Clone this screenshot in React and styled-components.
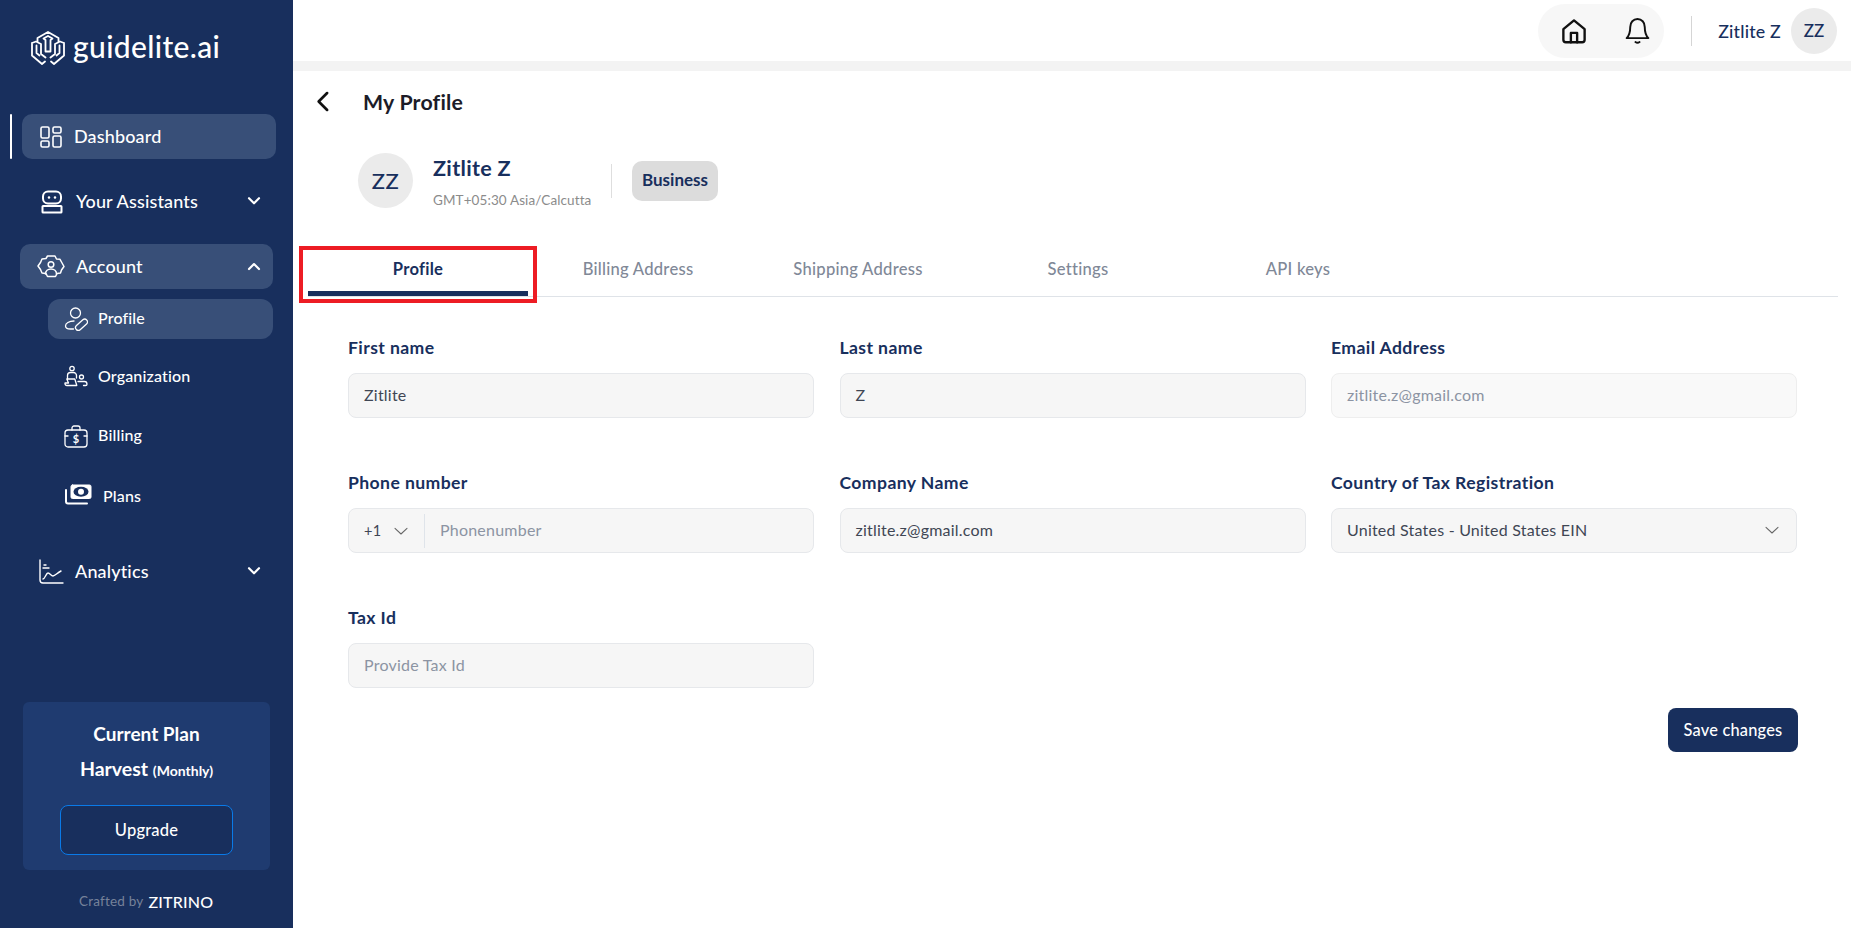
import React from "react";
import styled, { createGlobalStyle } from "styled-components";

const Global = createGlobalStyle`
  html, body { margin: 0; padding: 0; height: 100%; background: #fff; overflow: hidden; }
  body { font-family: Lato, "Noto Sans", sans-serif; color: #182f5d; }
  * { box-sizing: border-box; }
`;

const Shell = styled.div`display: flex; width: 1851px; height: 928px; overflow: hidden;`;
const Sidebar = styled.aside`
  width: 293px; flex: none; height: 928px; background: #182f5d; color: #fff;
  display: flex; flex-direction: column; padding-top: 28px;
`;
const Brand = styled.div`
  display: flex; align-items: center; gap: 8px; padding-left: 31px; height: 40px;
  font-size: 30px; font-weight: 500; letter-spacing: 0.35px;
  span { margin-top: -4px; }
`;
const Nav = styled.nav`display: flex; flex-direction: column; margin-top: 46px;`;
const TopRow = styled.div`
  position: relative; display: flex; align-items: center; height: 45px;
  margin-top: ${p => p.$mt || 0}px;
  margin-left: ${p => p.$ml || 20}px; width: ${p => p.$w || 253}px;
  padding-left: ${p => p.$pl || 20}px; padding-right: 9px; border-radius: 10px;
  background: ${p => p.$active ? "#384f78" : "transparent"};
  font-size: 18px; font-weight: 500; letter-spacing: 0.15px;
`;
const RowText = styled.span`margin-top: ${p => p.$sub ? -3 : -2}px;`;
const ActiveBar = styled.span`
  position: absolute; left: -12px; top: 0; bottom: 0; width: 2px; background: #fff; border-radius: 1px;
`;
const TopIcon = styled.span`display: flex; width: ${p => p.$w || 34}px; flex: none;`;
const Caret = styled.span`margin-left: auto; display: flex;`;
const SubRow = styled.div`
  display: flex; align-items: center; height: 40px; margin-left: 48px; width: 225px;
  margin-top: ${p => p.$mt}px; padding-left: 16px; border-radius: 12px;
  background: ${p => p.$active ? "#384f78" : "transparent"};
  font-size: 16px; font-weight: 500; letter-spacing: 0.15px;
`;
const SubIcon = styled.span`display: flex; width: ${p => p.$w || 34}px; flex: none;`;
const PlanCard = styled.div`
  margin: auto 0 0 23px; width: 247px; height: 168px; border-radius: 6px; background: #1f3b70;
  display: flex; flex-direction: column; align-items: center; padding-top: 20px;
`;
const PlanTitle = styled.div`font-size: 19px; font-weight: 700; line-height: 24px;`;
const PlanName = styled.div`
  font-size: 19.5px; font-weight: 700; line-height: 24px; margin-top: 11px;
  small { font-size: 14px; }
`;
const Upgrade = styled.button`
  margin-top: 22px; width: 173px; height: 50px; background: #182f5d; color: #fff;
  border: 1px solid #0a7ae8; border-radius: 8px; font: 500 16.5px Lato, sans-serif; letter-spacing: .2px;
`;
const Crafted = styled.div`
  height: 58px; padding: 4px 0 0 79px; display: flex; align-items: center; gap: 5px;
  font-size: 13.5px; color: #76829a; letter-spacing: .2px;
  b { font-size: 16px; font-weight: 500; color: #fff; letter-spacing: .2px; }
`;

const Main = styled.main`flex: 1; min-width: 0; display: flex; flex-direction: column;`;
const Header = styled.header`
  height: 61px; flex: none; display: flex; align-items: center; justify-content: flex-end; padding-right: 14px;
`;
const IconPill = styled.div`
  width: 126px; height: 54px; border-radius: 27px; background: #f7f7f7;
  display: flex; align-items: center; justify-content: space-between; padding: 0 12px 0 21px;
`;
const HeaderDivider = styled.span`width: 1px; height: 30px; background: #d5d5d5; margin: 0 26px 0 27px;`;
const HeaderName = styled.span`font-size: 17.8px; font-weight: 500; letter-spacing: .2px; color: #182f5d; margin-right: 10px;`;
const HeaderAvatar = styled.div`
  width: 46px; height: 46px; border-radius: 50%; background: #ebebeb; font-size: 17px; font-weight: 500;
  display: flex; align-items: center; justify-content: center;
`;
const Strip = styled.div`height: 10px; background: #f3f3f3; flex: none;`;
const Content = styled.div`flex: 1; padding: 0 13px 0 15px; position: relative;`;
const TitleRow = styled.div`display: flex; align-items: center; height: 62px; padding-left: 1px; margin-top: -1px;`;
const Title = styled.h1`margin: 2px 0 0 25px; font-size: 21.3px; font-weight: 700; color: #1c1c28; letter-spacing: .2px;`;
const ProfileHead = styled.div`display: flex; align-items: center; margin: 21px 0 0 50px; height: 55px;`;
const Avatar = styled.div`
  width: 55px; height: 55px; border-radius: 50%; background: #ebebeb; font-size: 22px; font-weight: 500;
  display: flex; align-items: center; justify-content: center; letter-spacing: .5px;
`;
const NameCol = styled.div`margin-left: 20px; width: 178px; display: flex; flex-direction: column;`;
const Name = styled.div`font-size: 21.6px; font-weight: 700; line-height: 30px; letter-spacing: .3px;`;
const Tz = styled.div`font-size: 13.5px; color: #8b8b8b; line-height: 18px; margin-top: 8px; letter-spacing: .1px;`;
const VDivider = styled.span`width: 1px; height: 34px; background: #dedede;`;
const Badge = styled.span`
  margin-left: 20px; width: 86px; height: 40px; border-radius: 10px; background: #dcdcdc;
  display: flex; align-items: center; justify-content: center; font-size: 17px; font-weight: 700; padding-bottom: 2px;
`;
const Tabs = styled.div`
  display: flex; margin-top: 38px; height: 51px; border-bottom: 1px solid #dfe3e8;
`;
const Tab = styled.div`
  position: relative; width: 220px; height: 50px; display: flex; align-items: center; justify-content: center;
  padding-bottom: ${p => p.$active ? 0 : 4}px;
  font-size: 16.6px; font-weight: ${p => p.$active ? 700 : 500}; letter-spacing: .25px;
  color: ${p => p.$active ? "#182f5d" : "#808897"};
  ${p => p.$active ? "border-bottom: 5px solid #182f5d;" : ""}
`;
const Callout = styled.span`
  position: absolute; left: -9px; right: -9px; top: 0; bottom: -12px; border: 4px solid #ed1c24;
  pointer-events: none;
`;
const Form = styled.div`
  display: grid; grid-template-columns: repeat(3, 466px); column-gap: 25.5px; row-gap: 53px;
  margin: 39px 0 0 40px;
`;
const Field = styled.div`display: flex; flex-direction: column;`;
const Label = styled.label`font-size: 17.6px; font-weight: 700; line-height: 24px; color: #182f5d; margin-bottom: 13px; letter-spacing: .4px;`;
const Box = styled.div`
  height: 45px; border: 1px solid ${p => p.$disabled ? "#eeeeee" : "#e6e8eb"}; border-radius: 8px;
  background: ${p => p.$disabled ? "#f9f9f9" : "#f6f6f6"}; display: flex; align-items: center; padding: 0 15px 2px;
  font-size: 16px; letter-spacing: .22px; color: ${p => p.$muted ? "#8c94a3" : "#3f4654"};
`;
const Code = styled.span`
  display: flex; align-items: center; gap: 11px; width: 61px; height: 34px; flex: none; margin-top: 2px;
  border-right: 1px solid #dfe4ea; font-size: 14.5px; color: #3f4654;
`;
const PhoneHint = styled.span`margin-left: 15px;`;
const Grow = styled.span`margin-left: auto; display: flex;`;
const Actions = styled.div`display: flex; justify-content: flex-end; width: 1450px; margin: 20px 0 0 40px;`;
const Save = styled.button`
  width: 130px; height: 44px; border: 0; border-radius: 8px; background: #182f5d; color: #fff;
  font: 500 16.4px Lato, sans-serif; letter-spacing: .2px; padding-bottom: 2px;
`;

const I = ({ s = 24, children, w = 1.7, c = "currentColor", vb = 24 }) => (
  <svg width={s} height={s} viewBox={`0 0 ${vb} ${vb}`} fill="none" stroke={c} strokeWidth={w} strokeLinecap="round" strokeLinejoin="round">{children}</svg>
);
const Logo = () => (
  <I s={34} w={1.8} vb={34}>
    <path d="M6.500 10.500V7L17 1l10.500 6v3.500" />
    <path d="M12.500 7.500 17 5l4.500 2.500L19.500 9v11.500h-5V9z" />
    <path d="M1 12l4-1.500 5 2.500v10l4.500 3.500M1 12v12.500L11 33l3-2.500" />
    <path d="M33 12l-4-1.500-5 2.500v10l-4.500 3.500M33 12v12.500L23 33l-3-2.500" />
    <path d="M5.500 14.500v7.500l3 2.500M28.500 14.500v7.500l-3 2.500" />
  </I>
);
const Chevron = ({ up }) => (
  <I s={20} w={2.600}><path d={up ? "M4 14.500 10 8.500l6 6" : "M4 7.500 10 13.500l6-6"} transform="translate(2 0)" /></I>
);
const DashIcon = () => <I s={22} w={1.600} vb={22}><rect x="1" y="1" width="8" height="11" rx="1.500" /><rect x="13" y="1" width="8" height="6" rx="1.500" /><rect x="1" y="15" width="8" height="6" rx="1.500" /><rect x="13" y="10" width="8" height="11" rx="1.500" /></I>;
const BotIcon = () => <I s={24} w={2}><rect x="3" y="1.500" width="18" height="12" rx="5" /><path d="M9 7.500h.01M15 7.500h.01" strokeWidth="2.600" /><rect x="2.500" y="16" width="19" height="6.500" rx=".6" /></I>;
const GearIcon = () => <I s={28} w={1.500} vb={28}><path d="M10.500 3h7.500l1.500 3 3.500.3 1.500 2.700 2.500 4.500-2.500 3.500-1 3-3.500.5-1.500 3H10.500L9 20.500 5 20l-1.500-3.500L1 13l2.500-3.500L5 6l4-.5z" /><circle cx="14" cy="11.500" r="2.800" /><path d="M8.500 21c0-3 2.500-5 5.500-5s5.500 2 5.500 5" /></I>;
const ProfileIcon = () => <I s={24} w={1.300}><circle cx="11.500" cy="6" r="5" /><path d="M10 14c-5 0-8.500 2.500-8.500 5 0 2 2 3 5 3h3" /><rect x="10.500" y="15" width="14" height="5.500" rx="2.700" transform="rotate(-42 17.500 17.750)" /></I>;
const OrgIcon = () => <I s={24} w={1.300}><circle cx="8" cy="3.500" r="2.200" /><path d="M3.500 14v-3.500a3 3 0 0 1 3-3h3a3 3 0 0 1 3 3V13" /><circle cx="17.500" cy="12" r="2" /><path d="M1 18h3.500l-1.700-4h8l2 6.500H3a2 2 0 0 1-2-2.500zM14 16.500h6.500c2 0 2.500 1.500 2.500 2.700 0 1-.5 1.300-1.500 1.300h-2" /></I>;
const BillIcon = () => <I s={24} w={1.300}><path d="M8 6V4a2 2 0 0 1 2-2h4a2 2 0 0 1 2 2v2" /><rect x="1" y="6" width="22" height="17" rx="3" /><path d="M1 12h3M20 12h3" /><text x="12" y="18.500" textAnchor="middle" fontSize="11" fontWeight="700" fill="currentColor" stroke="none" fontFamily="Lato">$</text></I>;
const PlansIcon = () => <I s={28} w={2} vb={28}><rect x="7" y="2" width="20" height="13.500" rx="1.500" fill="#fff" strokeWidth="1" /><ellipse cx="17" cy="8.750" rx="7.500" ry="5" fill="#182f5d" stroke="none" /><circle cx="17" cy="8.750" r="3" fill="#fff" stroke="none" /><path d="M2 7v11.500a2 2 0 0 0 2 2h19" /></I>;
const ChartIcon = () => <I s={26} w={1.400} vb={26}><path d="M2 1v20a3 3 0 0 0 3 3h20" /><path d="M5 20c2 0 3-6 5-6s3 3 5 3 4-3 8-5M6 6h2M5 9h6" /></I>;
const BackIcon = () => <I s={29} w={2.200} c="#111"><path d="M15 5l-7 7 7 7" /></I>;
const Home = () => <I s={30} w={1.900} c="#111"><path d="M3.500 10.500 12 3.500l8.500 7V19a2 2 0 0 1-2 2h-13a2 2 0 0 1-2-2z" /><path d="M9.500 21V13.500h5V21" /></I>;
const Bell = () => <I s={29} w={1.600} c="#111"><path d="M12 2.500c-3.500 0-6 2.700-6 6.500 0 5-1.300 7.500-3 9.300h18c-1.700-1.800-3-4.300-3-9.300 0-3.800-2.500-6.500-6-6.500z" /><path d="M10.300 21.500c1 .8 2.400.8 3.400 0" /></I>;
const Down = () => <I s={18} w={1.400} c="#666"><path d="M4 8.500l8 7.500 8-7.500" /></I>;

export default function App() {
  return (
    <Shell>
      <Global />
      <Sidebar>
        <Brand><Logo /><span>guidelite.ai</span></Brand>
        <Nav>
          <TopRow $active $ml={22} $w={254} $pl={18}><ActiveBar /><TopIcon $w={34}><DashIcon /></TopIcon><RowText>Dashboard</RowText></TopRow>
          <TopRow $mt={20}><TopIcon $w={36}><BotIcon /></TopIcon><RowText>Your Assistants</RowText><Caret><Chevron /></Caret></TopRow>
          <TopRow $mt={20} $active $pl={17}><TopIcon $w={39}><GearIcon /></TopIcon><RowText>Account</RowText><Caret><Chevron up /></Caret></TopRow>
          <SubRow $active $mt={10}><SubIcon><ProfileIcon /></SubIcon><RowText $sub>Profile</RowText></SubRow>
          <SubRow $mt={18}><SubIcon><OrgIcon /></SubIcon><RowText $sub>Organization</RowText></SubRow>
          <SubRow $mt={19}><SubIcon><BillIcon /></SubIcon><RowText $sub>Billing</RowText></SubRow>
          <SubRow $mt={21}><SubIcon $w={39}><PlansIcon /></SubIcon><RowText $sub>Plans</RowText></SubRow>
          <TopRow $mt={32} $pl={18}><TopIcon $w={37}><ChartIcon /></TopIcon><RowText>Analytics</RowText><Caret><Chevron /></Caret></TopRow>
        </Nav>
        <PlanCard>
          <PlanTitle>Current Plan</PlanTitle>
          <PlanName>Harvest <small>(Monthly)</small></PlanName>
          <Upgrade>Upgrade</Upgrade>
        </PlanCard>
        <Crafted>Crafted by <b>ZITRINO</b></Crafted>
      </Sidebar>
      <Main>
        <Header>
          <IconPill><Home /><Bell /></IconPill>
          <HeaderDivider />
          <HeaderName>Zitlite Z</HeaderName>
          <HeaderAvatar>ZZ</HeaderAvatar>
        </Header>
        <Strip />
        <Content>
          <TitleRow><BackIcon /><Title>My Profile</Title></TitleRow>
          <ProfileHead>
            <Avatar>ZZ</Avatar>
            <NameCol><Name>Zitlite Z</Name><Tz>GMT+05:30 Asia/Calcutta</Tz></NameCol>
            <VDivider />
            <Badge>Business</Badge>
          </ProfileHead>
          <Tabs>
            <Tab $active>Profile<Callout /></Tab>
            <Tab>Billing Address</Tab>
            <Tab>Shipping Address</Tab>
            <Tab>Settings</Tab>
            <Tab>API keys</Tab>
          </Tabs>
          <Form>
            <Field><Label>First name</Label><Box>Zitlite</Box></Field>
            <Field><Label>Last name</Label><Box>Z</Box></Field>
            <Field><Label>Email Address</Label><Box $disabled $muted>zitlite.z@gmail.com</Box></Field>
            <Field><Label>Phone number</Label><Box $muted><Code>+1 <Down /></Code><PhoneHint>Phonenumber</PhoneHint></Box></Field>
            <Field><Label>Company Name</Label><Box>zitlite.z@gmail.com</Box></Field>
            <Field><Label>Country of Tax Registration</Label><Box>United States - United States EIN<Grow><Down /></Grow></Box></Field>
            <Field><Label>Tax Id</Label><Box $muted>Provide Tax Id</Box></Field>
          </Form>
          <Actions><Save>Save changes</Save></Actions>
        </Content>
      </Main>
    </Shell>
  );
}
